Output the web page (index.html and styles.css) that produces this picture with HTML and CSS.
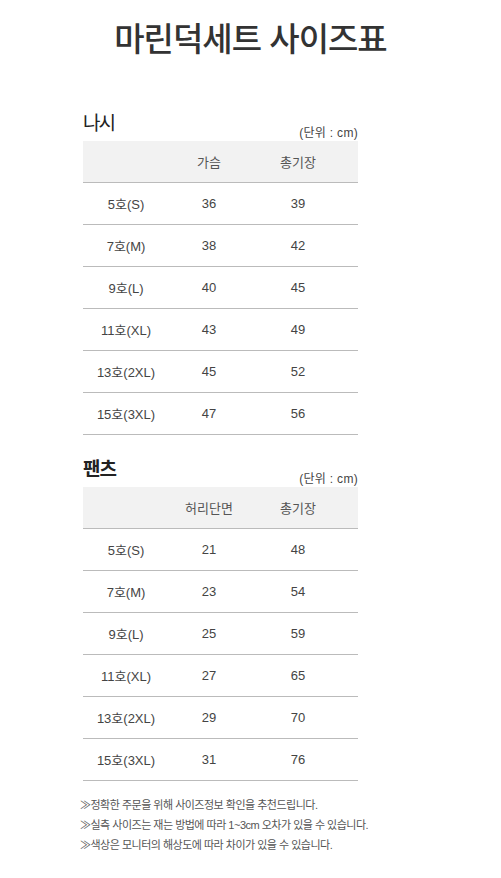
FILE: index.html
```html
<!DOCTYPE html>
<html lang="ko">
<head>
  <meta charset="UTF-8">
  <meta name="viewport" content="width=device-width, initial-scale=1.0">
  <title>마린덕세트 사이즈표</title>
  <link rel="stylesheet" href="styles.css">
</head>
<body>
  <div class="page">
    <h1>마린덕세트 사이즈표</h1>

    <div class="section first">
      <div class="section-head">
        <h2>나시</h2>
        <span class="unit">(단위 : cm)</span>
      </div>
      <div class="size-table">
        <div class="row head"><span></span><span>가슴</span><span>총기장</span></div>
        <div class="row"><span>5호(S)</span><span>36</span><span>39</span></div>
        <div class="row"><span>7호(M)</span><span>38</span><span>42</span></div>
        <div class="row"><span>9호(L)</span><span>40</span><span>45</span></div>
        <div class="row"><span>11호(XL)</span><span>43</span><span>49</span></div>
        <div class="row"><span>13호(2XL)</span><span>45</span><span>52</span></div>
        <div class="row"><span>15호(3XL)</span><span>47</span><span>56</span></div>
      </div>
    </div>

    <div class="section">
      <div class="section-head">
        <h2 class="bold">팬츠</h2>
        <span class="unit">(단위 : cm)</span>
      </div>
      <div class="size-table">
        <div class="row head"><span></span><span>허리단면</span><span>총기장</span></div>
        <div class="row"><span>5호(S)</span><span>21</span><span>48</span></div>
        <div class="row"><span>7호(M)</span><span>23</span><span>54</span></div>
        <div class="row"><span>9호(L)</span><span>25</span><span>59</span></div>
        <div class="row"><span>11호(XL)</span><span>27</span><span>65</span></div>
        <div class="row"><span>13호(2XL)</span><span>29</span><span>70</span></div>
        <div class="row"><span>15호(3XL)</span><span>31</span><span>76</span></div>
      </div>
    </div>

    <ul class="notes">
      <li>≫정확한 주문을 위해 사이즈정보 확인을 추천드립니다.</li>
      <li>≫실측 사이즈는 재는 방법에 따라 1~3cm 오차가 있을 수 있습니다.</li>
      <li>≫색상은 모니터의 해상도에 따라 차이가 있을 수 있습니다.</li>
    </ul>
  </div>
</body>
</html>
```

FILE: styles.css
```css
body { margin: 0; padding: 0; background: #fff; font-family: "Liberation Sans", "Noto Sans CJK KR", sans-serif; color: #444; }
.page { width: 501px; }
h1 { margin: 17px 0 0; font-family: "Noto Sans CJK KR", sans-serif; font-size: 33px; font-weight: 500; line-height: 40px; letter-spacing: -1px; text-align: center; color: #333; }

.section { margin: 19px 0 0 83px; width: 275px; }
.section.first { margin-top: 51px; }
.section-head { display: flex; justify-content: space-between; height: 33px; }
.section-head h2 { margin: 0; font-family: "Noto Sans CJK KR", sans-serif; font-size: 19px; font-weight: 400; line-height: 28px; letter-spacing: -2px; color: #222; }
.section-head h2.bold { font-weight: 700; letter-spacing: -1px; }
.unit { align-self: flex-end; font-size: 12px; line-height: 16px; letter-spacing: 0.3px; color: #444; }

.row { display: grid; grid-template-columns: 86px 80px 98px 1fr; align-items: center; height: 41px; border-bottom: 1px solid #bbb; font-size: 13px; color: #444; }
.row span { text-align: center; }
.row.head { background: #f2f2f2; color: #555; }

.notes { list-style: none; margin: 14px 0 0 80px; padding: 0; font-size: 11px; line-height: 20px; letter-spacing: -0.5px; color: #555; }
```
